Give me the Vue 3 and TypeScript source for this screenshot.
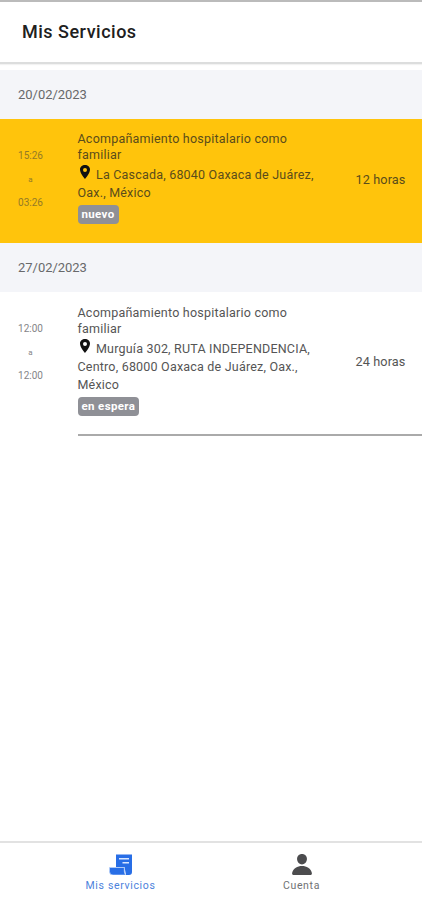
<script setup lang="ts">
interface Service {
  date: string
  start: string
  separator: string
  end: string
  title: string[]
  address: string[]
  status: string
  duration: string
  isNew: boolean
}

const services: Service[] = [
  {
    date: '20/02/2023',
    start: '15:26',
    separator: 'a',
    end: '03:26',
    title: ['Acompañamiento hospitalario como', 'familiar'],
    address: ['La Cascada, 68040 Oaxaca de Juárez,', 'Oax., México'],
    status: 'nuevo',
    duration: '12 horas',
    isNew: true,
  },
  {
    date: '27/02/2023',
    start: '12:00',
    separator: 'a',
    end: '12:00',
    title: ['Acompañamiento hospitalario como', 'familiar'],
    address: ['Murguía 302, RUTA INDEPENDENCIA,', 'Centro, 68000 Oaxaca de Juárez, Oax.,', 'México'],
    status: 'en espera',
    duration: '24 horas',
    isNew: false,
  },
]
</script>

<template>
  <div class="screen">
    <header class="toolbar"><h1>Mis Servicios</h1></header>
    <main class="content">
      <section v-for="service in services" :key="service.date">
        <div class="divider">{{ service.date }}</div>
        <article class="item" :class="{ fresh: service.isNew }">
          <div class="times">
            <span>{{ service.start }}</span>
            <span class="sep">{{ service.separator }}</span>
            <span>{{ service.end }}</span>
          </div>
          <div class="body">
            <div class="details">
              <h2><span v-for="line in service.title" :key="line">{{ line }}</span></h2>
              <div class="address">
                <span v-for="(line, i) in service.address" :key="line">
                  <svg v-if="i === 0" class="pin" viewBox="96 32 320 448" preserveAspectRatio="none">
                    <path d="M256 32C167.67 32 96 96.51 96 176c0 128 160 304 160 304s160-176 160-304c0-79.49-71.67-144-160-144zm0 224a64 64 0 1164-64 64.07 64.07 0 01-64 64z" />
                  </svg>{{ line }}</span>
              </div>
              <span class="badge">{{ service.status }}</span>
            </div>
            <div class="duration">{{ service.duration }}</div>
          </div>
        </article>
      </section>
    </main>
    <nav class="tabs">
      <a class="tab active">
        <svg viewBox="0 0 23 21">
          <path d="M7 .5h16V18a3 3 0 0 1-3 3h-3l-1.500-8H7z" />
          <path class="foot" d="M.5 13.500h14.800V17c0 1.500.5 3 1.500 4H4a3.500 3.500 0 0 1-3.500-3.500z" />
          <path class="rule" d="M10 4.800h10M13.500 8.800H20" />
        </svg>
        <span>Mis servicios</span>
      </a>
      <a class="tab">
        <svg viewBox="46 32 420 448" preserveAspectRatio="none" class="person">
          <path d="M332.64 64.58C313.18 43.57 286 32 256 32c-30.16 0-57.43 11.5-76.8 32.38-19.58 21.11-29.12 49.8-26.88 80.78C156.76 206.28 203.27 256 256 256s99.16-49.71 103.67-110.82c2.27-30.7-7.33-59.33-27.03-80.6zM432 480H80a31 31 0 01-24.2-11.13c-6.5-7.77-9.12-18.38-7.18-29.11C57.06 392.94 83.4 353.61 124.8 326c36.78-24.51 83.37-38 131.2-38s94.42 13.5 131.2 38c41.4 27.6 67.74 66.93 76.18 113.75 1.94 10.73-.68 21.34-7.18 29.11A31 31 0 01432 480z" />
        </svg>
        <span>Cuenta</span>
      </a>
    </nav>
  </div>
</template>

<style>
body {
  margin: 0;
}
</style>

<style scoped>
.screen {
  display: flex;
  flex-direction: column;
  box-sizing: border-box;
  height: 900px;
  overflow: hidden;
  border-top: 2px solid #bbb;
  background: #fff;
  color: #555;
  font-family: Roboto, sans-serif;
}
.toolbar {
  box-sizing: border-box;
  height: 62px;
  padding: 17px 22px 0;
  border-bottom: 2px solid #dcdddd;
  box-shadow: 0 1px 1px #f2f2f2;
}
h1 {
  margin: 0;
  font-size: 18px;
  font-weight: 500;
  line-height: 25px;
  letter-spacing: 0.5px;
  color: #202020;
}
.content {
  flex: 1;
  padding-top: 6px;
}
.divider {
  box-sizing: border-box;
  height: 49px;
  padding-left: 18px;
  background: #f4f5f9;
  color: #68696b;
  font-size: 13px;
  line-height: 49px;
  letter-spacing: -0.03px;
}
.item {
  display: flex;
  padding-left: 18px;
}
.fresh {
  height: 124px;
  background: #ffc40c;
  color: #5a4c1b;
}
.times {
  display: flex;
  flex-direction: column;
  align-items: center;
  width: 25px;
  margin-right: 34.5px;
  padding-top: 25px;
  font-size: 10px;
  line-height: 23.5px;
  color: #858588;
}
.fresh .times {
  color: #947a27;
}
.sep {
  font-size: 8px;
}
.body {
  display: flex;
  flex: 1;
  align-items: center;
  box-sizing: border-box;
  height: 144px;
  border-bottom: 2px solid #aaa;
}
.fresh .body {
  height: 124px;
  border: 0;
}
.details {
  width: 278px;
  align-self: flex-start;
  padding-top: 13px;
}
.fresh .details {
  padding-top: 12px;
}
h2 {
  margin: 0 0 3px;
  font-size: 12.5px;
  font-weight: 400;
  line-height: 15.5px;
  letter-spacing: 0.22px;
}
h2 span,
.address span {
  display: block;
  white-space: nowrap;
}
.address {
  font-size: 12.5px;
  line-height: 18.2px;
  letter-spacing: 0.2px;
}
.pin {
  width: 10px;
  height: 14px;
  margin: 0 6px 0 2.5px;
  fill: #111;
  vertical-align: 0;
}
.badge {
  display: block;
  width: fit-content;
  height: 19px;
  margin-top: 2px;
  padding: 0 4px;
  border-radius: 4px;
  background: #8f9096;
  color: #fff;
  font-size: 11.5px;
  font-weight: 700;
  line-height: 18px;
  letter-spacing: 0.35px;
}
.fresh .badge {
  margin-top: 3px;
}
.duration {
  padding-bottom: 3px;
  white-space: nowrap;
  font-size: 12.7px;
  letter-spacing: 0.1px;
}
.tabs {
  display: flex;
  box-sizing: border-box;
  height: 59px;
  padding: 0 30px;
  border-top: 2px solid #e2e2e2;
}
.tab {
  display: flex;
  flex: 1;
  flex-direction: column;
  align-items: center;
  padding-top: 11px;
  color: #707174;
  fill: #4c4c4e;
  font-size: 10.5px;
  line-height: 14px;
  letter-spacing: 0.65px;
}
.tab svg {
  width: 23px;
  height: 21px;
  margin-bottom: 4px;
}
.tab .person {
  width: 20px;
}
.active {
  color: #4b82dc;
  fill: #286ee6;
}
.foot {
  stroke: #b9d1fb;
  stroke-width: 0.7;
}
.rule {
  fill: none;
  stroke: #d9e7ff;
  stroke-width: 1.5;
}
</style>
